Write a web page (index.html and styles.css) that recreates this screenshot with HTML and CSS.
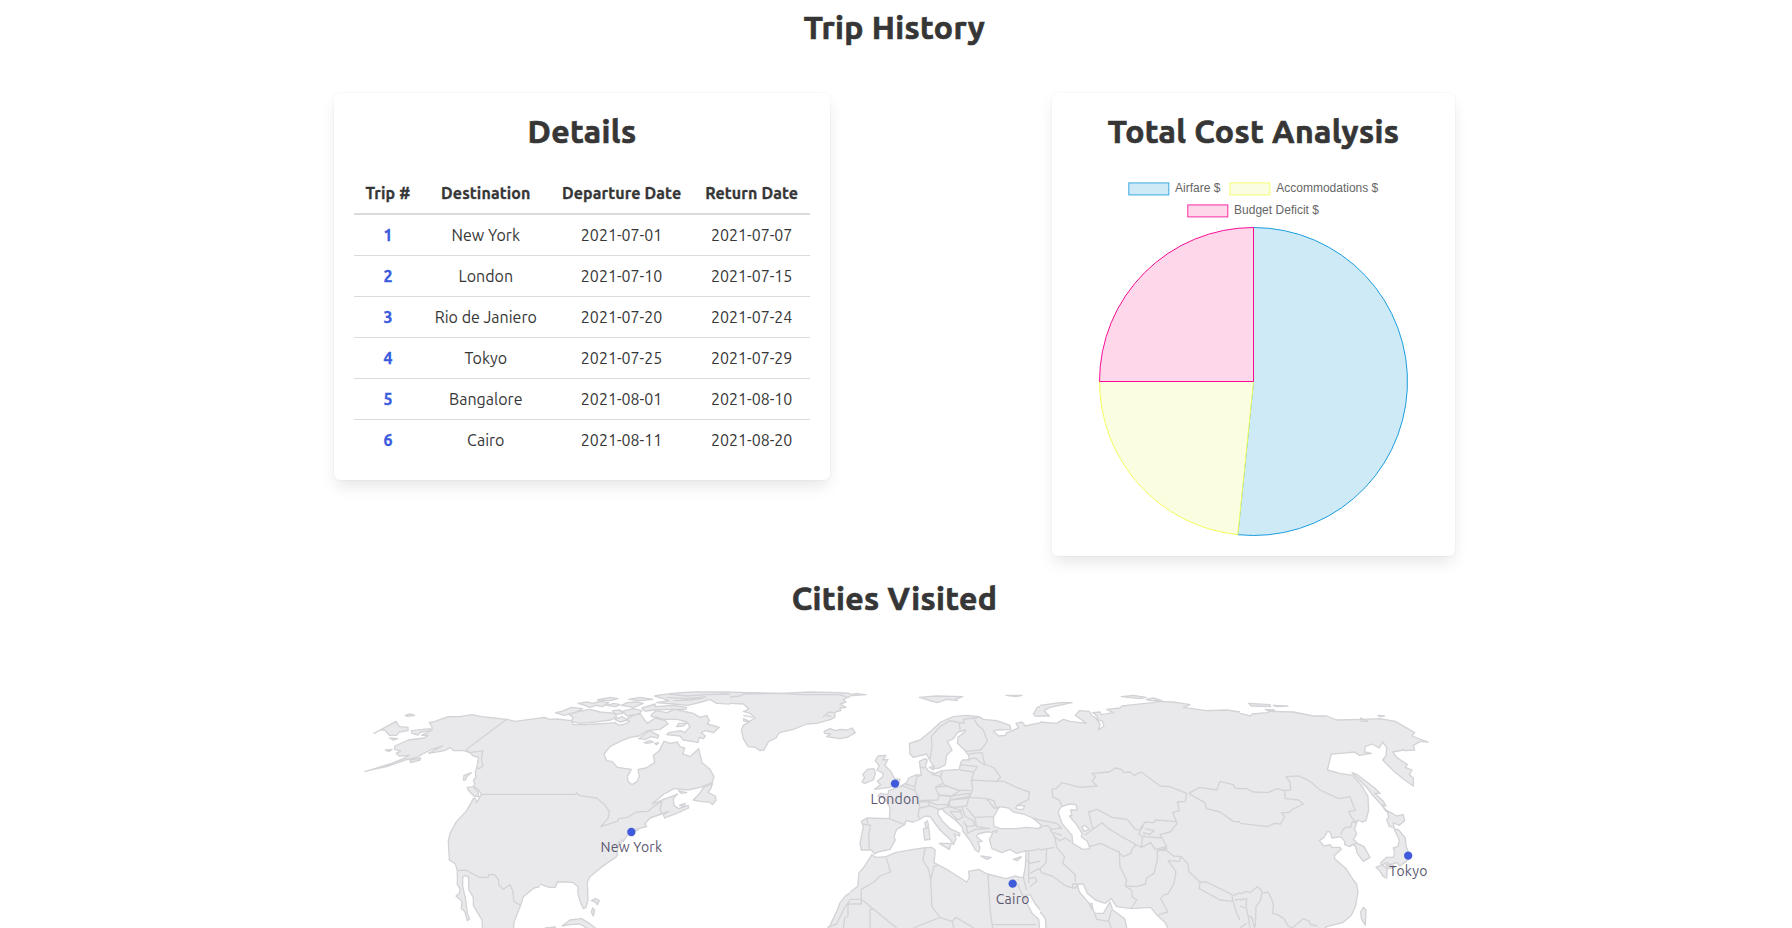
FILE: index.html
```html
<!DOCTYPE html>
<html lang="en">
<head>
<meta charset="utf-8">
<title>Trip History</title>
<link rel="stylesheet" href="styles.css">
</head>
<body>
<main class="page">
  <h1 class="title page-title">Trip History</h1>
  <div class="cards">
    <section class="card details">
      <h2 class="title">Details</h2>
      <table class="trips">
        <thead><tr><th>Trip #</th><th>Destination</th><th>Departure Date</th><th>Return Date</th></tr></thead>
        <tbody>
          <tr><td><a>1</a></td><td>New York</td><td>2021-07-01</td><td>2021-07-07</td></tr>
          <tr><td><a>2</a></td><td>London</td><td>2021-07-10</td><td>2021-07-15</td></tr>
          <tr><td><a>3</a></td><td>Rio de Janiero</td><td>2021-07-20</td><td>2021-07-24</td></tr>
          <tr><td><a>4</a></td><td>Tokyo</td><td>2021-07-25</td><td>2021-07-29</td></tr>
          <tr><td><a>5</a></td><td>Bangalore</td><td>2021-08-01</td><td>2021-08-10</td></tr>
          <tr><td><a>6</a></td><td>Cairo</td><td>2021-08-11</td><td>2021-08-20</td></tr>
        </tbody>
      </table>
    </section>
    <section class="card cost">
      <h2 class="title cost-title">Total Cost Analysis</h2>
      <svg class="chart" viewBox="0 0 363 363">
        <g class="legend">
          <rect class="air" x="56.8" y="9.9" width="40" height="12"/><text x="103" y="19" textLength="45.5">Airfare $</text>
          <rect class="acc" x="157.9" y="9.9" width="40" height="12"/><text x="204.3" y="19" textLength="102">Accommodations $</text>
          <rect class="def" x="115.8" y="31.9" width="40" height="12"/><text x="162" y="41" textLength="85">Budget Deficit $</text>
        </g>
        <path class="air" d="M181.5,208.5V54.5A154,154 0 1 1 165.8,361.7Z"/>
        <path class="acc" d="M181.5,208.5L165.8,361.7A154,154 0 0 1 27.5,208.5Z"/>
        <path class="def" d="M181.5,208.5H27.5A154,154 0 0 1 181.5,54.5Z"/>
      </svg>
    </section>
  </div>
  <h1 class="title cities-title">Cities Visited</h1>
  <svg class="map" viewBox="-48 0 3363 744">
    <!-- Alaska and the Pacific coast -->
    <svg class="land" x="0" y="0" width="570" height="744">
      <path d="M600,116L585,118 572,114 540,118 495,124 470,118 430,114 395,110 365,104 330,110 295,110 255,124 238,128 246,140 246,150 215,166 235,166 222,174 175,180 135,198 134,208 152,214 138,220 148,228 178,226 160,236 120,252 45,275 60,270 110,260 165,240 200,232 218,222 245,208 278,198 262,206 236,220 284,212 300,203 312,212 340,212 360,218 370,228 386,232 380,264 376,276 378,292 370,300 374,312 370,320 384,328 394,343 380,368 375,354 370,356 350,392 320,424 300,460 295,485 298,540 316,552 322,572 322,614 330,626 328,640 318,648 336,664 334,686 344,694 352,722 359,716 352,700 350,684 346,652 338,620 338,592 346,586 356,592 356,628 370,652 370,676 384,700 396,720 398,760 490,760 492,726 512,676 520,650 552,624 585,616 600,626Z"/>
      <path d="M72,160L138,124 148,140 174,142 174,152 148,156 140,166 118,166 104,150 90,150ZM166,106L180,102 194,106 172,109ZM184,152L240,146 244,152 212,156 204,165 186,160ZM118,174L144,176 130,180ZM106,210L126,208 116,215ZM180,240L212,234 210,240 182,248ZM340,300L342,286 364,278 352,288 346,300ZM352,322L370,320 384,336 386,350 372,348 354,330Z"/>
      <path class="border" d="M470,118L350,208 358,218 386,214 398,212 394,240 399,256 388,266 380,264M394,343H600M322,572L348,570 388,592 414,592 416,584 434,584 446,600 446,614 460,628 480,614 488,632 492,664 512,676"/>
    </svg>
    <!-- Eastern North America -->
    <svg class="land" x="570" y="0" width="570" height="744">
      <path d="M-20,118L0,114 15,112 28,118 50,117 94,122 100,134 134,134 168,132 200,130 226,128 236,136 256,132 268,124 262,116 284,104 302,102 312,118 322,130 346,114 376,122 384,132 360,148 322,152 296,168 270,172 240,184 210,200 192,222 200,242 216,244 232,262 274,268 262,290 264,304 276,314 292,304 298,288 294,268 318,264 344,248 340,226 358,212 372,184 392,190 412,186 420,200 434,204 428,222 450,230 476,206 486,248 510,268 522,290 516,308 480,322 444,330 402,326 372,342 336,372 366,360 404,346 412,342 400,356 402,376 416,386 444,376 446,384 410,400 374,414 370,404 386,394 364,402 330,414 314,432 320,440 284,448 262,466 250,484 246,478 242,494 236,484 232,520 230,530 206,546 186,560 150,590 142,606 144,660 138,682 130,686 120,664 114,640 114,620 100,608 80,606 52,606 46,622 28,622 0,612 -20,610Z"/>
      <path d="M46,98L66,94 94,82 128,86 110,96 72,106ZM94,124L100,112 88,104 108,96 150,88 180,96 224,100 230,110 212,120 180,124 150,128 120,130ZM114,70L140,66 158,70 180,64 206,68 188,80 168,76 150,82 128,74ZM172,60L210,52 234,56 210,62ZM200,76L222,70 240,74 226,80ZM244,76L262,68 290,66 310,70 280,82ZM266,58L300,52 338,58 300,62ZM246,94L280,86 306,92 296,102 262,108ZM218,92L240,90 248,100 226,104ZM224,118L246,110 264,120 240,126Z"/>
      <path d="M334,104L348,92 380,98 404,88 440,96 460,100 480,112 500,106 508,122 502,132 538,142 520,158 496,152 484,158 496,168 490,176 478,172 474,188 456,184 430,180 420,168 380,164 386,158 422,152 434,158 450,140 440,126 412,118 370,118 350,112 334,110ZM410,140L416,130 440,130 430,138ZM296,176L328,152 356,166 354,174 334,170 316,178ZM312,188L330,182 340,186 322,190ZM344,190L356,188 350,194ZM306,84L346,72 344,80 400,76 440,82 438,88 390,88 340,90 316,94Z"/>
      <path d="M344,48L366,44 420,38 470,36 600,36 600,74 530,70 510,58 484,66 444,76 400,72 350,68 386,62 370,56Z"/>
      <path d="M460,360L480,340 490,322 518,310 512,326 504,338 526,348 528,360 518,374 508,366 480,364ZM416,332L440,338 424,340ZM418,376L436,370 430,380ZM272,452L296,450 280,456ZM154,662L166,656 178,662 172,674 166,666ZM158,684L164,692 160,708 154,696ZM66,738L90,720 124,716 148,730 166,744 190,756 150,750 120,732 90,734ZM16,744l30,-3v6z"/>
      <path class="border" d="M-20,343H106L110,338 116,346 140,350 170,354 194,374 208,394 204,416 182,440 232,424 236,416 262,412 290,396 324,394 346,376 366,362 360,390 366,402M388,42L440,48 500,44 560,42 600,48M380,52L440,56 500,50M400,62L450,60 490,54"/>
    </svg>
    <!-- Greenland and the Atlantic -->
    <svg class="land" x="1140" y="0" width="360" height="744">
      <path d="M-30,74L0,70 40,72 56,86 48,92 40,94 60,100 76,114 58,124 40,116 42,124 60,124 40,136 34,150 40,176 54,200 76,202 90,212 102,210 116,184 138,174 148,158 190,148 230,132 260,130 290,122 302,118 314,112 316,96 332,92 330,84 348,82 330,72 348,66 340,60 352,52 408,44 380,42 330,38 240,36 150,40 60,38 -30,36Z"/>
      <path d="M282,154L300,146 316,152 330,148 352,150 366,144 376,158 352,172 328,176 290,170 302,162 284,160ZM290,760L306,724 322,690 330,668 348,646 370,635 400,620 400,760Z"/>
      <path class="border" d="M-10,52L30,48 40,42 150,40 220,44 330,44 352,52M40,106L70,112M278,112L296,96 312,98M288,106L304,110M340,744L344,714 354,708 354,672H395M390,657H362L340,690 320,732 292,742"/>
    </svg>
    <!-- Europe and North Africa -->
    <svg class="land" x="1500" y="0" width="570" height="744">
      <path fill-rule="evenodd" d="M34,424L50,414 118,416 120,384 106,356 84,348 92,340 114,344 116,332 150,320 170,308 176,294 200,284 214,286 208,244 226,236 232,240 226,260 236,274 254,280 276,272 328,268 332,248 338,240 358,240 356,226 346,214 392,210 348,214 322,190 324,172 344,156 346,150 324,156 310,176 292,184 306,210 290,226 286,254 268,264 254,266 238,238 230,222 190,232 180,222 178,190 210,180 244,152 272,126 310,110 350,106 388,110 400,118 440,122 480,136 482,148 440,150 430,154 446,168 466,166 470,158 506,144 498,130 516,126 526,138 560,130 620,124 620,760 -20,760 -12,646 24,618 26,580 40,564 62,530 66,524 76,532 108,530 136,518 190,508 220,504 244,502 256,510 252,548 290,568 322,588 350,606 358,594 356,574 386,568 412,582 468,596 496,588 510,592 520,592 526,560 528,512 500,520 480,508 456,518 426,506 418,478 428,460 420,456 408,456 384,462 380,470 396,484 384,486 390,504 386,516 376,510 362,484 350,468 340,456 336,440 316,420 300,408 284,396 276,386 264,390 264,402 276,422 300,446 330,460 328,468 312,462 318,476 310,494 302,480 270,450 240,410 226,408 206,420 190,426 168,422 164,434 140,448 132,470 136,480 120,508 84,516 74,522 64,510 34,510 30,490 40,440ZM448,380L430,412 432,438 450,446 500,446 530,442 566,446 574,436 548,414 520,402 490,396 476,384ZM496,384L504,376 524,378 520,388 504,388ZM526,646L540,644 556,672 586,708 590,770 572,770 566,718 546,700 530,668ZM428,454L442,452 440,457Z"/>
      <path d="M-8,44L-8,48 48,44 20,41ZM-8,150L6,144 16,158 -8,172M208,52L260,48 338,50 316,58 322,62 290,58 262,68 240,62ZM468,46L516,46 496,50ZM76,242L84,228 108,226 98,240 114,238 104,256 122,274 134,296 150,298 146,314 118,322 74,328 92,314 82,304 98,290 100,280 80,270 88,258ZM36,306L44,292 38,284 52,268 72,266 76,280 70,300 44,310ZM220,446L236,442 240,478 224,480ZM224,430L232,422 236,436 230,446ZM268,490L304,490 298,508ZM392,528L424,532 410,538ZM490,538L514,530 502,542ZM550,102L562,82 600,70 600,110 556,108ZM238,262l14,-4 -2,12z"/>
      <path class="border" d="M240,238L246,200 244,170 270,140 300,122 328,128 330,150M300,122L342,130 340,118 370,114 382,134 400,150 412,184 392,210M370,114L388,112M356,222L396,218 404,252 432,264 452,292 440,304M352,238L376,234 404,256M332,254L382,260 372,276 330,270M372,276L364,300 440,304 462,304 500,322 538,336 536,358 500,376M364,300L368,330 358,352M276,274L272,290 280,312 320,330 364,332M214,286L200,290 194,330 208,356M212,262L224,264M272,290L244,282M278,310L256,322 266,344 300,350M256,322L290,318 330,332 304,348 264,344M304,348L358,340 358,350 306,358M300,360L356,354 350,378 310,382 292,376ZM208,362L262,360 268,346 302,350 298,374 260,374 238,366M206,366L236,364 238,378 210,384ZM208,384L204,408 210,416M154,316L196,332M166,312L194,320M358,352L410,356 432,384 450,382M428,410L374,412 350,384M410,356L432,362 440,386M374,412L380,440 420,446M336,382L346,410 366,420 376,436 350,440 342,426M300,394L332,396 338,412 322,420ZM268,388L296,380 336,392M238,376L268,388M340,424L350,436 352,462M352,460L376,448 410,446M38,432L62,436 56,460 58,508M50,414L54,432M118,416L164,434M528,512L548,512 600,498M530,540L540,550 588,540 592,506M536,512V610M540,580L566,566 600,590M536,596L556,592 560,604 540,620M520,592L530,630M548,414L600,430M570,442L600,450"/>
      <path class="border" d="M226,504L218,540 236,568 242,600 252,560 262,556M242,600L246,680 270,712M108,532L122,576 90,588 72,606 34,628V658L140,744M414,584L420,690 428,744M426,734H558M190,744L270,712 306,724 318,712 372,744M306,724L312,744M-10,658H34V672H-10M60,744V688H76M502,612L526,662"/>
    </svg>
    <!-- Central Asia -->
    <svg class="land" x="2070" y="0" width="600" height="744">
      <path fill-rule="evenodd" d="M-20,124L0,126 50,130 70,118 90,124 138,130 106,106 118,92 148,94 156,108 166,112 180,132 176,150 192,138 188,124 172,118 172,108 158,98 180,96 184,104 220,98 200,88 240,84 246,78 280,74 340,68 352,64 400,66 450,74 430,82 500,92 560,90 600,96 620,98 620,760 390,760 376,728 350,704 332,682 276,686 230,680 214,656 196,670 166,660 142,640 130,612 112,612 118,636 156,680 164,700 190,700 210,666 218,690 254,716 264,760 20,770 16,716 4,700 -20,690ZM54,396L64,380 88,372 108,374 112,390 92,390 96,406 88,408 110,434 126,460 124,470 142,484 150,506 128,508 98,490 96,466 66,430ZM126,440L134,436 148,448 132,454ZM-10,430L4,434 2,444 -10,444Z"/>
      <path d="M-10,108L28,108 12,92 30,82 96,68 60,68 0,76 -10,82ZM244,50L280,46 318,52 300,56ZM318,58L340,54 366,62 330,62Z"/>
      <path class="sea" d="M-20,690L4,700 16,716 20,770 -20,770Z"/>
      <path class="border" d="M66,378L58,360 38,350 36,328 48,326 66,308 120,322 172,318 156,304 166,290 156,280 208,276 226,264 244,268 252,278 270,276 282,286 304,276 360,318 390,320 440,340 436,364 412,366 418,392 398,398 412,430M412,430L404,424 346,420 342,428 316,426 300,446M158,446L146,396 172,388 216,412 262,418 284,446 300,452 310,440M134,466L164,444 186,428 206,446 242,468 288,494 304,502 308,472 296,462 300,452M304,502L332,488 346,508 380,500 366,474 312,470 312,458 328,464 342,452 316,446M412,430L390,456 360,464 366,474M148,500L182,490 232,514 250,530 272,520 276,508 288,494M238,514L240,560 260,600 256,618 290,620 316,612 320,594 342,580 352,540 352,512 382,504M256,618L276,632 276,650 290,660 274,684M352,512L378,510 400,528 424,530 418,544 384,542 408,574 402,610 384,642 372,644 362,656 384,696 356,704M424,530L444,552 446,574 480,606L500,606 576,644 578,664 540,660 478,626 480,606M580,646L600,638M584,660L600,658M580,664L590,700 600,720M446,340L478,322 530,330 540,304 580,314 584,324 620,328M446,340L494,368 500,386 540,396 580,424 620,428M44,470L50,502 74,530 68,550 106,584V606M-10,512L44,502M20,506L18,548 0,566 4,578 40,590 74,616 98,624 108,624 112,612M98,624V612H112M-10,418L50,430 66,446M-10,444L20,436 36,448 64,444M30,448L44,470 60,482 76,474 94,486M40,458L66,466M164,700L170,718 206,724 214,690M206,724L214,744M156,690L148,672 156,670 158,686"/>
    </svg>
    <!-- East Asia -->
    <svg class="land" x="2670" y="0" width="600" height="744">
      <path d="M-20,96L0,100 32,108 36,102 82,98 88,94 160,96 220,108 260,108 290,120 372,118 420,116 466,124 524,158 516,168 564,186 542,184 520,196 524,210 496,212 490,210 458,216 470,232 502,254 496,262 516,270 508,284 520,294 520,318 494,300 460,272 428,240 438,228 440,202 428,186 418,204 396,192 376,200 374,216 394,220 358,226 344,216 302,220 274,222 262,270 300,280 338,286 366,318 384,350 386,390 378,422 366,426 354,420 350,428 344,448 350,462 340,478 352,490 372,500 390,532 370,544 352,520 346,498 336,494 330,500 314,494 314,484 302,470 276,474 270,456 262,454 252,472 238,482 252,498 270,494 276,502 300,502 304,508 284,526 284,536 298,548 320,568 340,600 350,612 354,636 346,680 334,706 308,728 260,740 240,760 -20,760Z"/>
      <path d="M462,446L476,450 496,474 498,498 506,520 504,540 480,558 470,548 450,554 440,548 424,556 422,548 440,532 460,532 464,520 460,504 474,500 478,480ZM440,418L446,414 442,392 470,408 490,404 494,422 478,436 460,428 462,442 448,440ZM408,562L428,554 442,568 440,594 430,590 420,574ZM438,554L460,556 464,562 444,566ZM336,278L352,284 404,324 420,340 404,340 430,364 438,378 424,374 400,348 380,322ZM424,374L446,398 438,394ZM362,696L370,682 378,690 376,736 364,716ZM26,70L90,74 92,80 34,78ZM100,76L144,78 110,80ZM76,88L104,90 90,94ZM414,106L434,108 420,110ZM362,114l22,10 -20,0z"/>
      <path class="border" d="M-20,328L0,326 20,326 40,336 84,338 110,326 134,332 136,356 176,360 190,372 154,390 148,398 124,398 134,410 122,432 104,430 82,440 0,430 -20,428M134,332L152,330 150,306 138,290 178,288 210,304 240,330 296,356 330,350 346,392 326,394 334,412 350,428M302,464L308,450 320,440 332,442 336,426 350,428M334,494L352,490M0,642L20,634 30,638 52,620 64,630 66,640 84,636 92,650 100,672 98,700 112,704 132,716 144,738 156,744 190,716 208,724 212,734 232,738M66,640L60,664 48,680 46,740M0,660L20,656 18,680 24,706 40,718M0,678L16,684M24,706L30,744M34,708L44,744M0,744L20,730"/>
    </svg>
    <g class="pins">
      <circle cx="844" cy="456" r="12.5"/><circle cx="1635" cy="311" r="12.5"/><circle cx="1988" cy="611" r="12.5"/><circle cx="3174.500" cy="527" r="12.5"/>
      <text x="844" y="515">New York</text>
      <text x="1635" y="371">London</text>
      <text x="1988" y="672">Cairo</text>
      <text x="3175" y="588">Tokyo</text>
    </g>
  </svg>
</main>
</body>
</html>
```
FILE: styles.css
```css
html, body { margin: 0; background: #fff; }
body {
  height: 928px;
  overflow: hidden;
  font-family: Ubuntu, "Noto Sans", sans-serif;
  font-size: 16px;
  line-height: 24px;
  color: #363636;
}
.page { width: 1121px; margin: 0 auto; padding: 9px 3px 0 0; }
.title {
  margin: 0;
  font-size: 32px;
  font-weight: 700;
  line-height: 36px;
  letter-spacing: .38px;
  -webkit-text-stroke: .7px #363636;
  text-align: center;
  color: #363636;
}
.cards { display: flex; justify-content: space-between; align-items: flex-start; margin-top: 48px; }
.card {
  box-sizing: border-box;
  padding: 20px;
  border-radius: 6px;
  background: #fff;
  box-shadow: 0 8px 16px -2px rgba(10, 10, 10, .1), 0 0 0 1px rgba(10, 10, 10, .02);
}
.details { width: 496px; height: 387px; }
.cost { width: 403px; height: 463px; }
.trips { width: 456px; margin: 24px 0 0; border-collapse: collapse; border-spacing: 0; }
.trips th, .trips td { padding: 8px 12px; text-align: center; white-space: nowrap; border: 0 solid #dbdbdb; }
.trips th { padding: 8px 11px; border-bottom-width: 2px; font-weight: 700; letter-spacing: .12px; -webkit-text-stroke: .3px #363636; }
.trips td { border-bottom-width: 1px; }
.trips tbody tr:last-child td { border-bottom-width: 0; }
.trips a { color: #3a5bdd; font-weight: 700; -webkit-text-stroke: .3px #3a5bdd; }
.chart { display: block; width: 363px; height: 363px; margin-top: 24px; }
.legend text { font: 12px "Liberation Sans", Arial, sans-serif; fill: #666; }
.air { fill: #cfeaf7; stroke: #1c9ddf; }
.acc { fill: #fbfde0; stroke: #f3ff5c; }
.def { fill: #ffd7ea; stroke: #f70c94; }
.legend rect { stroke-opacity: .85; }
.cities-title { margin-top: 24px; }
.map { display: block; width: 1121px; height: 248px; margin-top: 64px; }
.land path { fill: #e9e9eb; stroke: #d3d3d7; stroke-width: 4; stroke-linejoin: round; }
.land .border { fill: none; }
.land .sea { fill: #fff; }
.pins circle { fill: #3f5bdb; }
.pins text { font-size: 42px; fill: #5c5870; text-anchor: middle; letter-spacing: .7px; }
```
